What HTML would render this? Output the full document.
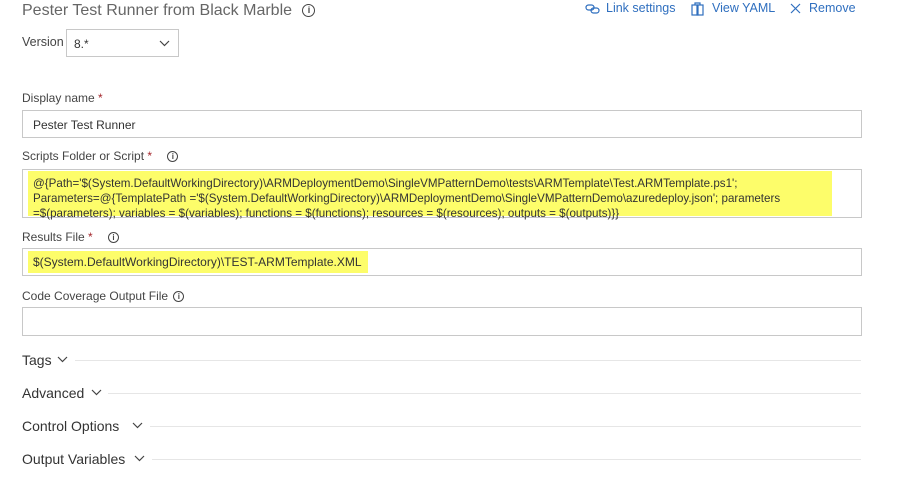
<!DOCTYPE html>
<html><head><style>
body{margin:0;width:900px;height:480px;background:#fff;font-family:"Liberation Sans",sans-serif;color:#333;position:relative;overflow:hidden}
.a{position:absolute;white-space:nowrap}
.box{position:absolute;border:1px solid #c8c8c8;background:#fff;box-sizing:border-box}
.lbl{font-size:12px;color:#444}
.req{color:#a4262c}
.info{display:inline-block;width:9px;height:9px;border:1px solid #444;border-radius:50%;font-size:8px;line-height:9px;text-align:center;vertical-align:middle;font-weight:bold}
.hl{background:#fdfd6a}
.sec{font-size:14px;color:#333}
.line{position:absolute;height:1px;background:#e6e6e6}
.blue{color:#2f6fbf;font-size:12.5px}
svg{position:absolute}
</style></head><body>
<div class="a" style="left:22px;top:2px;font-size:16px;color:#666">Pester Test Runner from Black Marble <span class="info" style="width:11px;height:11px;line-height:11px;font-size:9px;margin-left:6px;color:#444">i</span></div>
<svg style="left:585px;top:3px" width="16" height="12" viewBox="0 0 16 12"><g fill="none" stroke="#2f6fbf" stroke-width="1.2"><rect x="1" y="2" width="8" height="5" rx="2.5"/><rect x="6" y="5" width="8" height="5" rx="2.5"/></g></svg>
<div class="a blue" style="left:606px;top:1px">Link settings</div>
<svg style="left:691px;top:2px" width="13" height="14" viewBox="0 0 13 14"><g fill="none" stroke="#2f6fbf" stroke-width="1.2"><rect x="1" y="3" width="6" height="10"/><rect x="6" y="3" width="6" height="10"/><path d="M4 3V1h5v2"/></g></svg>
<div class="a blue" style="left:712px;top:1px">View YAML</div>
<svg style="left:790px;top:3px" width="11" height="11" viewBox="0 0 11 11"><path d="M1 1L10 10M10 1L1 10" stroke="#2f6fbf" stroke-width="1.2"/></svg>
<div class="a blue" style="left:809px;top:1px">Remove</div>
<div class="a lbl" style="left:22px;top:35px;font-size:12.5px">Version</div>
<div class="box" style="left:66px;top:29px;width:113px;height:28px"><span class="a" style="left:7px;top:7px;font-size:12px">8.*</span>
<svg style="left:92px;top:10px" width="11" height="7" viewBox="0 0 11 7"><path d="M1 1l4.5 4.5L10 1" fill="none" stroke="#444" stroke-width="1.2"/></svg></div>
<div class="a lbl" style="left:22px;top:91px">Display name <span class="req">*</span></div>
<div class="box" style="left:22px;top:110px;width:840px;height:28px"><span class="a" style="left:10px;top:7px;font-size:12px">Pester Test Runner</span></div>
<div class="a lbl" style="left:22px;top:149px">Scripts Folder or Script <span class="req">*</span> <span class="info" style="margin-left:12px">i</span></div>
<div class="box" style="left:22px;top:169px;width:840px;height:49px"></div>
<div class="a hl" style="left:28px;top:171px;width:804px;height:45px"></div>
<div class="a" style="left:33px;top:176px;font-size:11.6px;line-height:15px;color:#333">@{Path='$(System.DefaultWorkingDirectory)\ARMDeploymentDemo\SingleVMPatternDemo\tests\ARMTemplate\Test.ARMTemplate.ps1';<br>Parameters=@{TemplatePath ='$(System.DefaultWorkingDirectory)\ARMDeploymentDemo\SingleVMPatternDemo\azuredeploy.json'; parameters<br>=$(parameters); variables = $(variables); functions = $(functions); resources = $(resources); outputs = $(outputs)}}</div>
<div class="a lbl" style="left:22px;top:230px">Results File <span class="req">*</span> <span class="info" style="margin-left:12px">i</span></div>
<div class="box" style="left:22px;top:248px;width:840px;height:28px"></div>
<div class="a hl" style="left:28px;top:251px;width:340px;height:22px"></div>
<div class="a" style="left:33px;top:255px;font-size:12px">$(System.DefaultWorkingDirectory)\TEST-ARMTemplate.XML</div>
<div class="a lbl" style="left:22px;top:289px">Code Coverage Output File <span class="info" style="margin-left:2px">i</span></div>
<div class="box" style="left:22px;top:307px;width:840px;height:29px"></div>
<div class="a sec" style="left:22px;top:352px">Tags</div>
<svg style="left:57px;top:356px" width="11" height="7" viewBox="0 0 11 7"><path d="M1 1l4.5 4.5L10 1" fill="none" stroke="#444" stroke-width="1.2"/></svg>
<div class="line" style="left:75px;top:360px;width:786px"></div>
<div class="a sec" style="left:22px;top:385px">Advanced</div>
<svg style="left:91px;top:389px" width="11" height="7" viewBox="0 0 11 7"><path d="M1 1l4.5 4.5L10 1" fill="none" stroke="#444" stroke-width="1.2"/></svg>
<div class="line" style="left:108px;top:393px;width:753px"></div>
<div class="a sec" style="left:22px;top:418px">Control Options</div>
<svg style="left:132px;top:422px" width="11" height="7" viewBox="0 0 11 7"><path d="M1 1l4.5 4.5L10 1" fill="none" stroke="#444" stroke-width="1.2"/></svg>
<div class="line" style="left:150px;top:426px;width:711px"></div>
<div class="a sec" style="left:22px;top:451px">Output Variables</div>
<svg style="left:134px;top:455px" width="11" height="7" viewBox="0 0 11 7"><path d="M1 1l4.5 4.5L10 1" fill="none" stroke="#444" stroke-width="1.2"/></svg>
<div class="line" style="left:152px;top:459px;width:709px"></div>
</body></html>
